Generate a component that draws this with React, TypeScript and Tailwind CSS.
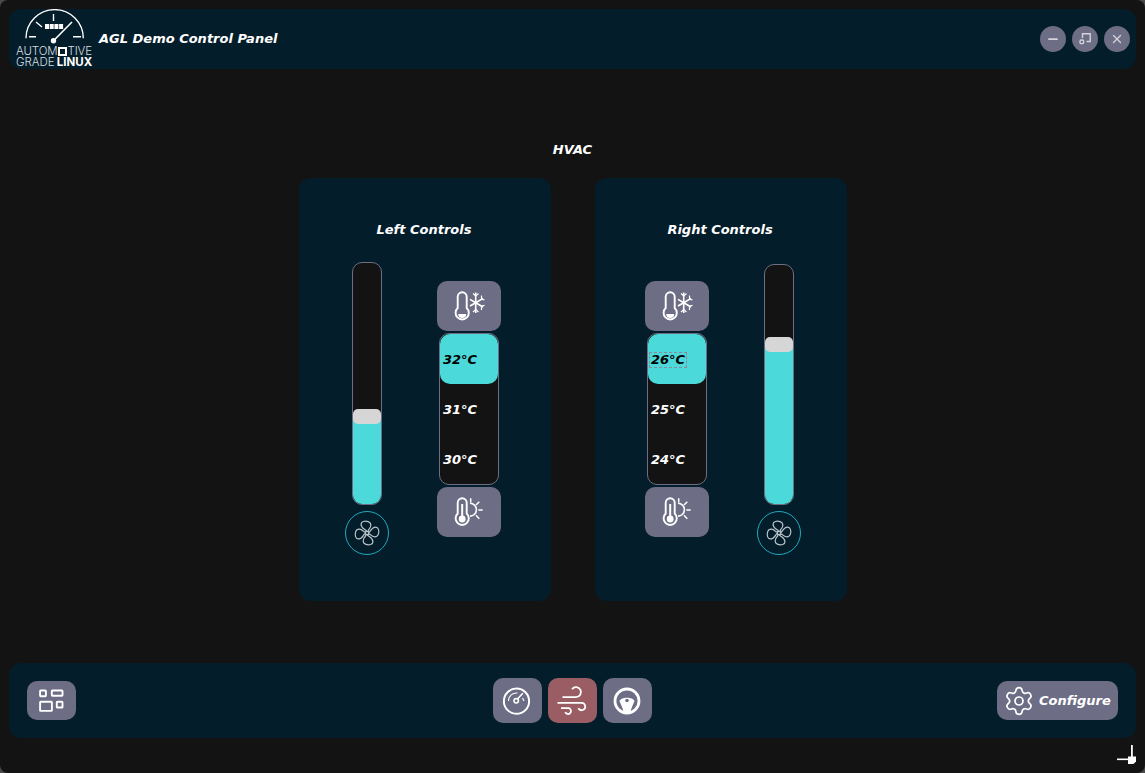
import { Settings, X, Minus } from 'lucide-react';

function Logo() {
  return (
    <div className="relative w-[76px] h-[60px] shrink-0">
      <svg width="76" height="36" viewBox="0 0 76 36" className="absolute left-0 top-0" fill="none" stroke="#fff" strokeWidth="1.4">
        <path d="M10 29.3 A 28.65 28.65 0 0 1 67.3 29.3" />
        <path d="M37.5 5 V12" />
        <path d="M20 13 L26 18" />
        <path d="M13 27.7 H20" />
        <path d="M57 27.7 H65" />
        <path d="M37.5 31.7 L56 13" strokeWidth="1.6" />
        <circle cx="37.5" cy="31.7" r="2.7" fill="#fff" stroke="none" />
        <g fill="#fff" stroke="none">
          <rect x="29" y="15" width="4" height="5" />
          <rect x="33.7" y="15" width="4" height="5" />
          <rect x="38.4" y="15" width="4" height="5" />
          <rect x="43.1" y="15" width="4" height="5" />
        </g>
      </svg>
      <div className="absolute left-0 top-[37px] w-[76px] text-[#d9dde0] font-['Inter',sans-serif] font-light text-[11.5px] leading-[11px] whitespace-nowrap">
        <div className="flex items-center tracking-[-0.1px]">
          AUTOM<span className="inline-block w-[9px] h-[9px] border-[2px] border-white mx-[0.5px]" />TIVE
        </div>
        <div className="flex">
          GRADE<span className="font-bold text-white ml-[2px]">LINUX</span>
        </div>
      </div>
    </div>
  );
}

function WindowButton({ children }: { children: React.ReactNode }) {
  return <div className="w-[26px] h-[26px] rounded-full bg-[#6d6d85] flex items-center justify-center text-[#d4d4dc]">{children}</div>;
}

function ColdButton() {
  return (
    <div className="w-[64px] h-[50px] rounded-[10px] bg-[#6d6d85]">
      <svg width="64" height="50" viewBox="0 0 64 50" fill="none" stroke="#fff" strokeWidth="1.9">
        <path d="M20.7 27 V15.8 a4.5 4.5 0 0 1 9 0 V27 a6.6 6.6 0 1 1 -9 0 Z" />
        <path d="M21.2 33 a4 4 0 0 0 8 0 Z" fill="#fff" stroke="none" />
        <path d="M38.7 11.5 V32" strokeWidth="1.6" />
        <path d="M38.7 21.7 L46 17.4 M38.7 21.7 L46 26 M38.7 21.7 L33 18.4 M38.7 21.7 L33 25" strokeWidth="1.6" />
        <path d="M36 12.5 L38.7 15 L41.5 12.5 M36 31 L38.7 28.5 L41.5 31 M44.5 14.5 V18.2 L47.5 19 M44.5 29 V25.2 L47.5 24.4" strokeWidth="1.2" />
      </svg>
    </div>
  );
}

function HotButton() {
  return (
    <div className="w-[64px] h-[50px] rounded-[10px] bg-[#6d6d85]">
      <svg width="64" height="50" viewBox="0 0 64 50" fill="none" stroke="#fff" strokeWidth="1.9">
        <path d="M20.7 26.5 V15.8 a4.5 4.5 0 0 1 9 0 V26.5 a6.6 6.6 0 1 1 -9 0 Z" />
        <circle cx="25.2" cy="32" r="3.4" fill="#fff" stroke="none" />
        <path d="M25.2 31 V17" strokeWidth="2" />
        <path d="M33 16.3 a6.4 6.4 0 0 1 0 12.8" strokeWidth="1.6" />
        <path d="M33.7 11.3 V15.5 M42.3 14.7 L39 18 M41.3 23 H45.7 M39 28.3 L42.3 31.7" strokeWidth="1.5" />
      </svg>
    </div>
  );
}

const blade = 'M0 -1.5 C-1.5 -3.5 -5.5 -4 -5.5 -8 C-5.5 -10.5 -2 -11.5 1 -10.5 C4.5 -9.3 4 -5.5 1.8 -3.5 C1.2 -3 1 -2 1.2 -1';

function FanIcon() {
  return (
    <div className="w-[44px] h-[44px] rounded-full border border-[#1fa9bd] flex items-center justify-center">
      <svg width="26" height="26" viewBox="-12 -12 24 24" fill="none" stroke="#b9c4ca" strokeWidth="1.1">
        <path d={blade} />
        <path d={blade} transform="rotate(90)" />
        <path d={blade} transform="rotate(180)" />
        <path d={blade} transform="rotate(270)" />
        <circle r="1.5" />
      </svg>
    </div>
  );
}

function Slider({ height, fill }: { height: number; fill: number }) {
  return (
    <div
      className="relative w-[30px] rounded-[10px] border border-[#6d6d85] bg-[#131313] overflow-hidden"
      style={{ height }}
    >
      <div className="absolute inset-x-0 bottom-0 bg-[#4bd9d9]" style={{ height: fill }} />
      <div className="absolute inset-x-0 h-[15px] rounded-[5px] bg-[#d6d6d6]" style={{ bottom: fill - 6 }} />
    </div>
  );
}

function TempList({ temps, focused }: { temps: string[]; focused?: boolean }) {
  return (
    <div className="w-[60px] h-[152px] rounded-[10px] border border-[#6d6d85] bg-[#131313] my-[2px] mx-auto">
      {temps.map((t, i) => (
        <div
          key={t}
          className={`h-[50px] flex items-center pl-[1px] pt-[1px] text-[13px] font-bold italic ${i === 0 ? 'bg-[#4bd9d9] text-black rounded-[10px]' : 'text-white'}`}
        >
          <span className={`px-[2px] leading-[16px] ${i === 0 && focused ? 'outline-1 outline-dashed outline-[#8a8a9a] -outline-offset-1' : ''}`}>{t}</span>
        </div>
      ))}
    </div>
  );
}

function TempColumn({ temps, focused }: { temps: string[]; focused?: boolean }) {
  return (
    <div className="w-[64px] mt-[19px]">
      <ColdButton />
      <TempList temps={temps} focused={focused} />
      <HotButton />
    </div>
  );
}

function SliderColumn({ height, fill, top }: { height: number; fill: number; top: string }) {
  return (
    <div className={`w-[44px] flex flex-col items-center gap-[6px] ${top}`}>
      <Slider height={height} fill={fill} />
      <FanIcon />
    </div>
  );
}

function BarButton({ children, active }: { children: React.ReactNode; active?: boolean }) {
  return <div className={`w-[49px] h-[45px] rounded-[10px] flex items-center justify-center ${active ? 'bg-[#9a5d63]' : 'bg-[#6d6d85]'}`}>{children}</div>;
}

export default function App() {
  return (
    <div className="w-[1145px] h-[773px] bg-[#4a4a4a]">
      <div className="relative w-full h-full rounded-[8px] bg-[#131313] text-white overflow-hidden flex flex-col pt-[9px] px-[9px] font-['DejaVu_Sans',sans-serif]">
        <header className="h-[60px] shrink-0 rounded-[12px] bg-[#031d2a] flex items-center pl-[7px] pr-[6px]">
          <Logo />
          <h1 className="ml-[7px] text-[13px] font-bold italic">AGL Demo Control Panel</h1>
          <div className="ml-auto flex gap-[6px]">
            <WindowButton><Minus size={14} strokeWidth={3} /></WindowButton>
            <WindowButton>
              <svg width="14" height="14" viewBox="0 0 14 14" fill="none" stroke="#d4d4dc" strokeWidth="1.4">
                <path d="M4.5 6 V1.8 H12.2 V9.5 H8.5" />
                <rect x="2" y="8" width="3.6" height="3.6" rx="1.2" />
              </svg>
            </WindowButton>
            <WindowButton><X size={14} strokeWidth={2.2} /></WindowButton>
          </div>
        </header>

        <main className="flex-1 flex flex-col items-center">
          <h2 className="mt-[73px] h-[16px] leading-[16px] text-[13px] font-bold italic">HVAC</h2>
          <div className="mt-[20px] flex gap-[44px] pl-[1px]">
            <section className="w-[252px] h-[423px] rounded-[12px] bg-[#031d2a] pt-[44px]">
              <h3 className="h-[16px] leading-[16px] text-[13px] font-bold italic text-center pr-[2px]">Left Controls</h3>
              <div className="mt-[24px] pl-[46px] flex gap-[48px] items-start">
                <SliderColumn height={243} fill={86} top="" />
                <TempColumn temps={['32°C', '31°C', '30°C']} />
              </div>
            </section>
            <section className="w-[252px] h-[423px] rounded-[12px] bg-[#031d2a] pt-[44px]">
              <h3 className="h-[16px] leading-[16px] text-[13px] font-bold italic text-center pr-[2px]">Right Controls</h3>
              <div className="mt-[24px] pl-[50px] flex gap-[48px] items-start">
                <TempColumn temps={['26°C', '25°C', '24°C']} focused />
                <SliderColumn height={241} fill={158} top="mt-[2px]" />
              </div>
            </section>
          </div>
        </main>

        <footer className="h-[75px] shrink-0 mb-[35px] rounded-[12px] bg-[#031d2a] grid grid-cols-3 items-center px-[18px]">
          <div className="w-[49px] h-[39px] rounded-[10px] bg-[#6d6d85]">
            <svg width="49" height="39" viewBox="0 0 49 39" fill="none" stroke="#fff" strokeWidth="1.9">
              <rect x="13.1" y="9.5" width="5.8" height="5.7" rx="0.6" />
              <rect x="24.8" y="9.5" width="10.7" height="5.2" rx="0.6" />
              <rect x="13.1" y="20.8" width="11.8" height="9.1" rx="0.6" />
              <rect x="29.8" y="20.8" width="5.7" height="5.7" rx="0.6" />
            </svg>
          </div>
          <div className="flex justify-center gap-[6px]">
            <BarButton>
              <svg width="30" height="30" viewBox="0 0 30 30" fill="none" stroke="#fff" strokeWidth="2">
                <circle cx="14.5" cy="15.2" r="12.6" />
                <path d="M6.5 15 a8 8 0 0 1 9 -8" strokeWidth="1.1" />
                <path d="M15.5 13 L20.8 7.2" strokeWidth="1.6" />
                <circle cx="14.2" cy="14.8" r="2.2" strokeWidth="1.6" />
                <path d="M20.5 12 L22 15" strokeWidth="1.1" />
              </svg>
            </BarButton>
            <BarButton active>
              <svg width="30" height="30" viewBox="0 0 30 30" fill="none" stroke="#fff" strokeWidth="1.8">
                <path d="M5.5 11.2 H19 a5 5 0 1 0 -4 -8" />
                <path d="M0.5 16.8 H24.5 a3.7 3.7 0 1 1 -3.2 5.5" />
                <path d="M4 22.2 H12 a3 3 0 1 1 -3.8 4" />
              </svg>
            </BarButton>
            <BarButton>
              <svg width="30" height="30" viewBox="0 0 30 30" fill="none" stroke="#fff">
                <circle cx="15" cy="15" r="12" strokeWidth="2.8" />
                <path d="M7.5 15 C9 10.5 21 10.5 22.5 15 C21.5 18 19.5 21 18.5 26 H11.5 C10.5 21 8.5 18 7.5 15 Z" fill="#fff" stroke="none" />
                <circle cx="15" cy="14.5" r="1.8" fill="#6d6d85" stroke="none" />
              </svg>
            </BarButton>
          </div>
          <div className="justify-self-end w-[121px] h-[39px] rounded-[10px] bg-[#6d6d85] flex items-center pl-[6px] gap-[4px]">
            <Settings size={32} strokeWidth={1.3} />
            <span className="text-[13px] font-bold italic">Configure</span>
          </div>
        </footer>

        <div className="absolute left-[1117px] top-[745px] w-[20px] h-[22px]">
          <svg width="20" height="22" viewBox="0 0 20 22" fill="#fff">
            <rect x="14" y="0" width="1.8" height="18" />
            <rect x="0" y="13.5" width="14" height="1.6" />
            <path d="M11 11.5 H19 V16.5 L16.5 19 H11 Z" />
          </svg>
        </div>
      </div>
    </div>
  );
}
